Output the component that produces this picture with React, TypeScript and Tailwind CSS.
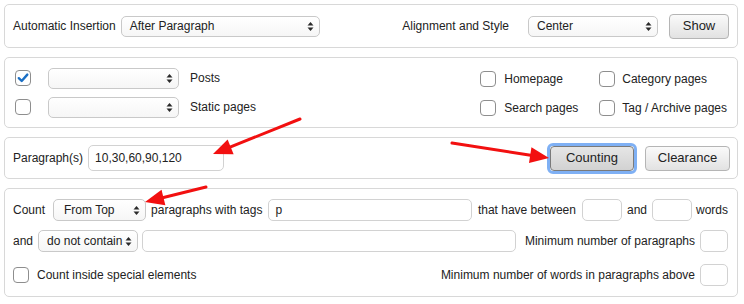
import React from "react";

const Arrows = () => (
  <svg width="9" height="11" viewBox="0 0 9 11" className="shrink-0">
    <path d="M4.5 1 L7.5 4.5 L1.5 4.5 Z" fill="#2a2a2a" />
    <path d="M4.5 10 L7.5 6.5 L1.5 6.5 Z" fill="#2a2a2a" />
  </svg>
);

function Select({ w, h = 21, text = "", pl = "pl-[8px]" }: { w: number; h?: number; text?: string; pl?: string }) {
  return (
    <div
      className={`flex shrink-0 items-center justify-between whitespace-nowrap rounded-[5px] border border-[#c9c9c9] bg-gradient-to-b from-white to-[#f6f6f6] ${pl} pr-[4px] text-[#222]`}
      style={{ width: w, height: h }}
    >
      <span>{text}</span>
      <Arrows />
    </div>
  );
}

function Input({ w, h = 22, text = "" }: { w: number; h?: number; text?: string }) {
  return (
    <div
      className="flex shrink-0 items-center rounded-[5px] border border-[#d2d2d2] bg-white pl-[6px] text-[#222]"
      style={{ width: w, height: h }}
    >
      {text}
    </div>
  );
}

function Checkbox({ checked = false }: { checked?: boolean }) {
  return (
    <div className="flex h-[16px] w-[16px] shrink-0 items-center justify-center rounded-[4px] border border-[#8e8e8e] bg-white">
      {checked && (
        <svg width="12" height="12" viewBox="0 0 12 12">
          <path d="M1.8 6.2 L4.7 9 L10.3 2.6" fill="none" stroke="#1b6fc4" strokeWidth="2.4" strokeLinecap="round" strokeLinejoin="round" />
        </svg>
      )}
    </div>
  );
}

function Button({ children, w, focused = false }: { children: React.ReactNode; w: number; focused?: boolean }) {
  if (focused) {
    return (
      <div className="rounded-[6px] border-[3px] border-[#7fb0f4] p-0">
        <div
          className="flex h-[25px] items-center justify-center rounded-[4px] border border-[#7a7a7a] bg-gradient-to-b from-[#e6e6e6] to-[#d2d2d2] text-[13px] text-[#222]"
          style={{ width: w }}
        >
          {children}
        </div>
      </div>
    );
  }
  return (
    <div
      className="flex h-[25px] items-center justify-center rounded-[4px] border border-[#b5b5b5] bg-gradient-to-b from-[#fafafa] to-[#e2e2e2] text-[13px] text-[#222]"
      style={{ width: w }}
    >
      {children}
    </div>
  );
}

function Arrow({ s, t }: { s: [number, number]; t: [number, number] }) {
  const dx = t[0] - s[0];
  const dy = t[1] - s[1];
  const len = Math.hypot(dx, dy);
  const ux = dx / len;
  const uy = dy / len;
  const L = 19;
  const W = 8;
  const bx = t[0] - ux * L;
  const by = t[1] - uy * L;
  const px = -uy;
  const py = ux;
  const pts = `${t[0]},${t[1]} ${bx + px * W},${by + py * W} ${bx - px * W},${by - py * W}`;
  return (
    <g>
      <line x1={s[0]} y1={s[1]} x2={bx + ux * 2} y2={by + uy * 2} stroke="#f21010" strokeWidth="3" strokeLinecap="round" />
      <polygon points={pts} fill="#f21010" />
    </g>
  );
}

export default function App() {
  return (
    <div
      className="relative h-[304px] w-[744px] whitespace-nowrap bg-white text-[12px] text-[#222]"
      style={{ fontFamily: '"Liberation Sans", Arial, sans-serif' }}
    >
      <div className="flex flex-col gap-[9px] pl-[4px] pr-[6px] pt-[4px]">
        {/* Panel 1 */}
        <div className="flex h-[44px] items-center justify-between rounded-[5px] border border-[#d8d8d8] pl-[8px] pr-[8px]">
          <div className="flex items-center gap-[5px]">
            <span>Automatic Insertion</span>
            <Select w={199} text="After Paragraph" />
          </div>
          <div className="flex items-center">
            <span className="mr-[19px]">Alignment and Style</span>
            <Select w={130} text="Center" />
            <div className="ml-[11px]">
              <Button w={60}>Show</Button>
            </div>
          </div>
        </div>

        {/* Panel 2 */}
        <div className="flex h-[71px] items-center justify-between rounded-[5px] border border-[#d8d8d8] pl-[10px] pr-[10px]">
          <div className="flex flex-col gap-[8px]">
            <div className="flex items-center">
              <Checkbox checked />
              <div className="ml-[17px] mr-[11px]">
                <Select w={131} h={21} />
              </div>
              <span>Posts</span>
            </div>
            <div className="flex items-center">
              <Checkbox />
              <div className="ml-[17px] mr-[11px]">
                <Select w={131} h={21} />
              </div>
              <span>Static pages</span>
            </div>
          </div>
          <div className="mt-[2px] flex flex-col gap-[11px]">
            <div className="flex items-center">
              <div className="flex w-[119px] items-center gap-[8px]">
                <Checkbox />
                <span>Homepage</span>
              </div>
              <div className="flex items-center gap-[7px]">
                <Checkbox />
                <span>Category pages</span>
              </div>
            </div>
            <div className="flex items-center">
              <div className="flex w-[119px] items-center gap-[8px]">
                <Checkbox />
                <span>Search pages</span>
              </div>
              <div className="flex items-center gap-[7px]">
                <Checkbox />
                <span>Tag / Archive pages</span>
              </div>
            </div>
          </div>
        </div>

        {/* Panel 3 */}
        <div className="flex h-[42px] items-center justify-between rounded-[5px] border border-[#d8d8d8] pl-[8px] pr-[7px]">
          <div className="flex items-center gap-[5px]">
            <span>Paragraph(s)</span>
            <Input w={136} h={26} text="10,30,60,90,120" />
          </div>
          <div className="flex items-center gap-[8px]">
            <Button w={84} focused>
              Counting
            </Button>
            <Button w={85}>Clearance</Button>
          </div>
        </div>

        {/* Panel 4 */}
        <div className="flex h-[109px] flex-col rounded-[5px] border border-[#d8d8d8] pl-[8px] pr-[9px] pt-[10px]">
          <div className="flex h-[22px] items-center">
            <span>Count</span>
            <div className="ml-[8px] mr-[5px]">
              <Select w={93} h={22} text="From Top" pl="pl-[10px]" />
            </div>
            <span>paragraphs with tags</span>
            <div className="ml-[6px] min-w-0 flex-1">
              <div className="flex h-[22px] items-center rounded-[5px] border border-[#d2d2d2] bg-white pl-[6px]">p</div>
            </div>
            <span className="ml-[6px]">that have between</span>
            <div className="ml-[6px]">
              <Input w={40} h={22} />
            </div>
            <span className="ml-[5px]">and</span>
            <div className="ml-[5px]">
              <Input w={40} h={22} />
            </div>
            <span className="ml-[4px]">words</span>
          </div>
          <div className="mt-[9px] flex h-[22px] items-center">
            <span>and</span>
            <div className="ml-[5px]">
              <Select w={100} h={22} text="do not contain" pl="pl-[8px]" />
            </div>
            <div className="ml-[4px] min-w-0 flex-1">
              <div className="h-[22px] rounded-[5px] border border-[#d2d2d2] bg-white" />
            </div>
            <span className="ml-[9px]">Minimum number of paragraphs</span>
            <div className="ml-[5px]">
              <Input w={28} h={22} />
            </div>
          </div>
          <div className="mt-[12px] flex h-[22px] items-center">
            <Checkbox />
            <span className="ml-[8px]">Count inside special elements</span>
            <span className="ml-auto">Minimum number of words in paragraphs above</span>
            <div className="ml-[5px]">
              <Input w={28} h={22} />
            </div>
          </div>
        </div>
      </div>

      <svg className="pointer-events-none absolute left-0 top-0" width="744" height="304">
        <Arrow s={[300, 119]} t={[213, 154]} />
        <Arrow s={[452, 143]} t={[549, 158]} />
        <Arrow s={[206, 187]} t={[145, 202]} />
      </svg>
    </div>
  );
}
